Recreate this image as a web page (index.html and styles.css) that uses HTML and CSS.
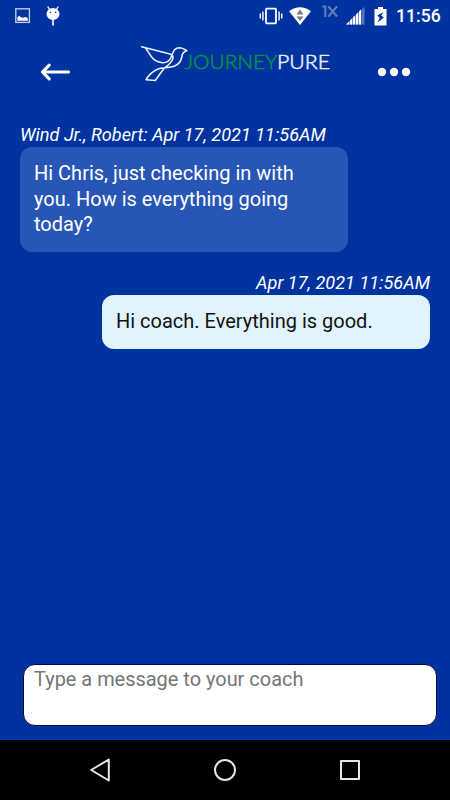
FILE: index.html
```
<!DOCTYPE html>
<html lang="en">
<head>
  <meta charset="UTF-8">
  <meta name="viewport" content="width=device-width, initial-scale=1.0">
  <title>JourneyPure Coaching</title>
  <link rel="stylesheet" href="styles.css">
</head>
<body>
  <div class="status-bar">
    <div class="status-left">
      <svg width="16" height="16" viewBox="0 0 16 16">
        <rect x="0.8" y="0.8" width="13.6" height="13.6" fill="none" stroke="#c8d2ec" stroke-width="1.3"/>
        <path d="M2.4 12.8V9.2l1.8-1.4 2.2 1.7 2.3.3 2-1 2.2 1.8v2.2z" fill="#fff"/>
      </svg>
      <svg class="android" width="14" height="20" viewBox="0 0 14 20">
        <path d="M1.7.7l2 3M12.3.7l-2 3" stroke="#fff" stroke-width="1.2"/>
        <ellipse cx="7" cy="8" rx="6.5" ry="6" fill="#fff"/>
        <circle cx="4.4" cy="6.3" r="0.8" fill="#0033a0"/>
        <circle cx="9.6" cy="6.3" r="0.8" fill="#0033a0"/>
        <path d="M7 14v5.5" stroke="#fff" stroke-width="1.7"/>
      </svg>
    </div>
    <div class="status-right">
      <svg width="24" height="18" viewBox="0 0 24 18">
        <rect x="7" y="1.7" width="10" height="14.6" rx="0.8" fill="none" stroke="#fff" stroke-width="1.8"/>
        <path d="M1.3 6.5v5M3.9 4.5v9M22.7 6.5v5M20.1 4.5v9" stroke="#fff" stroke-width="1.4"/>
      </svg>
      <svg class="wifi" width="22" height="18" viewBox="0 0 22 18">
        <path d="M0 4.2Q11-3.8 22 4.2L11 18z" fill="#fff"/>
        <path d="M7.5 7.4L11 2.6l3.5 4.8zM7.5 9.6h7L11 14z" fill="#737b80"/>
      </svg>
      <svg class="one-x" width="17" height="13" viewBox="0 0 17 13">
        <path d="M.3 1.6h3V12M6.3 1.3L15 11.5M15 1.3L6.3 11.5" fill="none" stroke="#637fc2" stroke-width="2"/>
      </svg>
      <svg class="signal" width="19" height="18" viewBox="0 0 19 18">
        <path d="M0 17.5L15.5 2.5v15z" fill="#fff" opacity="0.45"/>
        <path d="M0 17.5l3-3v3zM4 13.5l2-2v6H4zM7 10.5l2-2v9H7zM10 7.5l2-2v12h-2zM13 4.5l2-2v15h-2z" fill="#fff"/>
        <path d="M16 2l2.5-2v17.5H16z" fill="#5676bf"/>
      </svg>
      <svg class="battery" width="13" height="19" viewBox="0 0 13 19">
        <path d="M4 0h5v2h3.5v16.5H.5V2H4z" fill="#fff"/>
        <path d="M9.6 5L3.2 8.5l2.5 2.3-2.1 4.6 6.3-5-2.7-1.9z" fill="#0033a0"/>
      </svg>
      <span class="clock">11:56</span>
    </div>
  </div>

  <header class="header">
    <svg class="back" width="30" height="18" viewBox="0 0 30 18">
      <path d="M28.5 9H2.8M9.2 2.2L2.5 9l6.7 6.8" fill="none" stroke="#fff" stroke-width="3.1" stroke-linecap="round" stroke-linejoin="round"/>
    </svg>
    <svg class="logo" width="190" height="38" viewBox="0 0 190 38">
      <g fill="none" stroke="#edf1fa" stroke-width="1.6" stroke-linecap="round" stroke-linejoin="round">
        <path d="M1.7 1.7L29 8.8C32 9.6 33.2 10.8 33 13C32.4 17.2 29 19.5 25.3 22.3C23 24 20.8 28 15.3 35.5L6 34.8C8.5 30 12.5 26.5 18 24C22 22.3 29.5 23.2 34.7 21C39.3 19 41.2 15.5 41.8 12C42.3 9 42.6 7.4 46.8 5.5C44 4.6 43 2.8 39.7 2.7C33.5 2.7 33.3 7.3 31 12.5C29.3 16.3 26.2 17.9 22.5 17.7C17.5 17.3 13.3 15 11 11.2C9.6 8.8 7.5 6 5.4 2.8"/>
      </g>
      <text class="logo-text journey" x="44.5" y="24" textLength="93" lengthAdjust="spacingAndGlyphs">JOURNEY</text>
      <text class="logo-text pure" x="137" y="24" textLength="53" lengthAdjust="spacingAndGlyphs">PURE</text>
    </svg>
    <svg class="more" width="34" height="10" viewBox="0 0 34 10">
      <g fill="#fff">
        <circle cx="5" cy="5" r="4.2"/>
        <circle cx="17" cy="5" r="4.2"/>
        <circle cx="29" cy="5" r="4.2"/>
      </g>
    </svg>
  </header>

  <main class="messages">
    <div class="message coach">
      <div class="meta">Wind Jr., Robert: Apr 17, 2021 11:56AM</div>
      <div class="bubble">Hi Chris, just checking in with you. How is everything going today?</div>
    </div>
    <div class="message me">
      <div class="meta">Apr 17, 2021 11:56AM</div>
      <div class="bubble">Hi coach. Everything is good.</div>
    </div>
  </main>

  <textarea class="composer" placeholder="Type a message to your coach"></textarea>

  <nav class="nav-bar">
    <svg width="24" height="26" viewBox="0 0 24 26">
      <path d="M20.8 2.5v21L3.2 13z" fill="none" stroke="#e6e6e6" stroke-width="2" stroke-linejoin="round"/>
    </svg>
    <svg width="24" height="26" viewBox="0 0 24 26">
      <circle cx="12" cy="13" r="10" fill="none" stroke="#e6e6e6" stroke-width="2"/>
    </svg>
    <svg width="24" height="26" viewBox="0 0 24 26">
      <rect x="3" y="4" width="18" height="18" fill="none" stroke="#e6e6e6" stroke-width="2" stroke-linejoin="round"/>
    </svg>
  </nav>
</body>
</html>
```
FILE: styles.css
```
* {
  box-sizing: border-box;
}

body {
  margin: 0;
  height: 100vh;
  display: flex;
  flex-direction: column;
  background: #0033a0;
  color: #fff;
  font-family: Roboto, sans-serif;
  overflow: hidden;
}

svg {
  display: block;
  flex: none;
}

.status-bar {
  height: 32px;
  display: flex;
  justify-content: space-between;
  padding: 0 9px 0 15px;
}

.status-left,
.status-right {
  display: flex;
  align-items: center;
}

.android {
  margin-left: 15px;
}

.wifi {
  margin-left: 6px;
}

.one-x {
  margin: 0 7px 10px 11px;
}

.battery {
  margin-left: 9px;
}

.clock {
  width: 45px;
  margin-left: 9px;
  font-size: 17.6px;
  font-weight: 500;
  line-height: 33px;
  white-space: nowrap;
}

.header {
  height: 90px;
  display: flex;
  align-items: flex-start;
  padding: 13px 39px 0 40px;
}

.back {
  margin-top: 18px;
}

.logo {
  margin: 0 auto 0 70px;
}

.logo-text {
  font-family: Lato, sans-serif;
  font-size: 19.5px;
  font-weight: 300;
  stroke-width: 0.5px;
}

.journey {
  fill: #00923f;
  stroke: #00923f;
}

.pure {
  fill: #edf1fa;
  stroke: #edf1fa;
}

.more {
  margin-top: 22px;
}

.messages {
  flex: 1;
  padding: 0 20px;
}

.message {
  display: flex;
  flex-direction: column;
  margin-bottom: 18px;
}

.meta {
  font-size: 18.12px;
  font-style: italic;
  line-height: 25px;
}

.bubble {
  width: 328px;
  padding: 14px 38px 14px 14px;
  border-radius: 12px;
  font-size: 20px;
  line-height: 25.7px;
}

.coach .bubble {
  background: #2856b6;
}

.me {
  align-items: flex-end;
}

.me .bubble {
  background: #e1f4fd;
  color: #111;
}

.composer {
  height: 62px;
  margin: 0 13px 14px 23px;
  padding: 1px 10px;
  border: 1px solid #00083c;
  border-radius: 12px;
  background: #fff;
  font-family: Roboto, sans-serif;
  font-size: 19.95px;
  line-height: 26px;
  resize: none;
  outline: none;
}

.composer::placeholder {
  color: #757575;
}

.nav-bar {
  height: 60px;
  display: flex;
  align-items: center;
  justify-content: space-between;
  padding: 0 88px;
  background: #000;
}
```
